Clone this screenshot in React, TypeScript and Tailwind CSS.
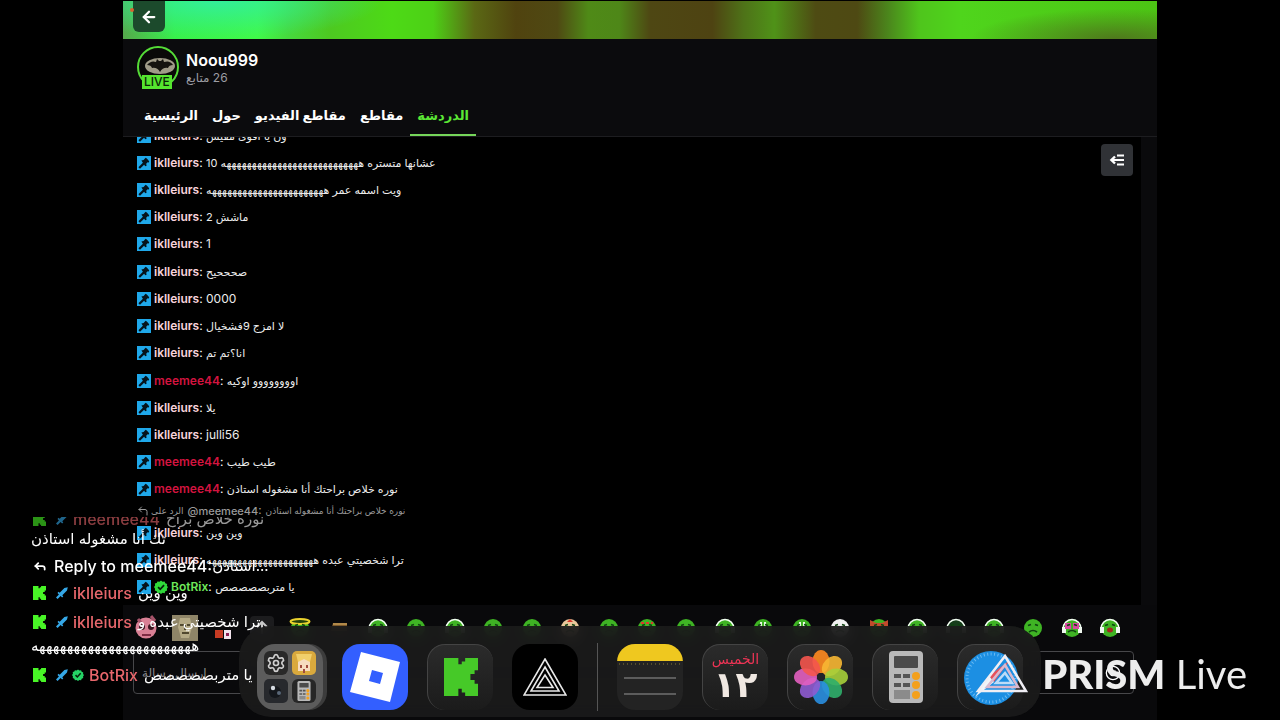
import React from 'react';
import { ArrowLeft, CornerUpLeft, Reply, Settings, Smile } from 'lucide-react';

type Message = { user: string; text: string; bot?: boolean; latin?: boolean };

const MESSAGES: Message[] = [
  { user: 'iklleiurs', text: 'ون يا اقوى مفيش' },
  { user: 'iklleiurs', text: 'عشانها متستره هههههههههههههههههههههههههههه 10' },
  { user: 'iklleiurs', text: 'ويت اسمه عمر هههههههههههههههههههههههه' },
  { user: 'iklleiurs', text: 'ماشش 2' },
  { user: 'iklleiurs', text: '1', latin: true },
  { user: 'iklleiurs', text: 'صحححيح' },
  { user: 'iklleiurs', text: '0000', latin: true },
  { user: 'iklleiurs', text: 'لا امزج 9فشخيال' },
  { user: 'iklleiurs', text: 'انا؟تم تم' },
  { user: 'meemee44', text: 'اوووووووو اوكيه' },
  { user: 'iklleiurs', text: 'يلا' },
  { user: 'iklleiurs', text: 'julli56', latin: true },
  { user: 'meemee44', text: 'طيب طيب' },
  { user: 'meemee44', text: 'نوره خلاص براحتك أنا مشغوله استاذن' },
];

const LATEST: Message[] = [
  { user: 'iklleiurs', text: 'وين وين' },
  { user: 'iklleiurs', text: 'ترا شخصيتي عبده هههههههههههههههههههههه' },
  { user: 'BotRix', text: 'يا متربصصصصص', bot: true },
];

const TABS = ['الرئيسية', 'حول', 'مقاطع الفيديو', 'مقاطع', 'الدردشة'];

const EMOTES = [
  'pink', 'statue', 'flag', 'more', 'halo', 'box', 'phones', 'plain', 'phones', 'plain', 'plain', 'santa', 'plain',
  'red', 'plain', 'phones', 'teeth', 'teeth', 'white', 'frog', 'phones', 'dark', 'phones', 'face', 'glasses', 'sing', 'white',
];

const PETALS = ['#ff8a1f', '#f7b733', '#a6cf3a', '#2fae6a', '#2a8fe0', '#8e5bd0', '#e35fc0', '#f4554e'];

const KickLogo: React.FC<{ className: string }> = ({ className }) => (
  <svg viewBox="0 0 9 9" preserveAspectRatio="none" className={className} fill="currentColor">
    <path d="M0 0h3.800v1.500h.9V.8h.9V0H9v2.900h-.9v.9H7v1.400h1.100v.9H9V9H5.600v-.8h-.9v-.9h-.9V9H0z" />
  </svg>
);

const ModBadge: React.FC = () => (
  <svg viewBox="0 0 14 14" className="size-[14px] shrink-0">
    <rect width="14" height="14" fill="#1fa8ea" />
    <path d="M2.2 12 7.6 6.600" stroke="#05131c" strokeWidth="2.200" />
    <path d="m4.400 4.600 2.200-.6 2-2.200 1.200.6 2.400 2.800-.4 1.400-1.200-.4-1.400 1.600.4 2-1.400.4z" fill="#05131c" />
  </svg>
);

const Sword: React.FC = () => (
  <svg viewBox="0 0 12 12" className="size-3 shrink-0">
    <path d="M11.8.2 11 3.600 6.300 8.300l1 1.200-1.200 1-1.500-1.400L1.600 12 0 10.400l2.900-2.900L1.500 6l1-1.200 1.200 1L8.400 1z" fill="#35a7e6" />
  </svg>
);

const Verified: React.FC<{ className: string }> = ({ className }) => (
  <svg viewBox="0 0 16 16" className={className}>
    <path d="m8 .5 1.8 1.4 2.3-.3.8 2.1 2.1.9-.3 2.2L16 8l-1.3 1.9.3 2.2-2.1.8-.8 2.1-2.3-.3L8 16l-1.8-1.3-2.3.3-.8-2.1-2.1-.8.3-2.2L0 8l1.3-1.8L1 4l2.1-.6.8-1.8 2.3.3z" fill="currentColor" />
    <path d="m4.7 8.2 2.4 2.4 4.4-4.8" fill="none" stroke="#06210a" strokeWidth="2" />
  </svg>
);

const Emote: React.FC<{ kind: string }> = ({ kind }) => {
  if (kind === 'pink') {
    return (
      <svg viewBox="0 0 24 26" className="h-[26px] w-6">
        <circle cx="12" cy="13" r="10.5" fill="#d98095" />
        <path d="M4 4 8 9M17 1l4 5" stroke="#a8546b" strokeWidth="3" />
        <circle cx="8" cy="12" r="3" fill="#3b1520" />
        <circle cx="17" cy="12" r="3" fill="#3b1520" />
        <circle cx="8" cy="11" r="1" fill="#fff" />
        <path d="M8 20h9" stroke="#7e2c43" strokeWidth="2" />
      </svg>
    );
  }
  if (kind === 'statue') {
    return (
      <svg viewBox="0 0 26 26" className="size-[26px]">
        <rect width="26" height="26" fill="#8f8568" />
        <path d="M8 3h10l2 9-3 11H9L6 12z" fill="#b5aa86" />
        <path d="M8 10h4M15 10h4M10 18h7M13 10v5" stroke="#51482f" strokeWidth="2" />
      </svg>
    );
  }
  if (kind === 'flag') {
    return (
      <svg viewBox="0 0 22 22" className="size-[22px]">
        <rect x="3" y="13" width="8" height="8" fill="#c63b23" />
        <rect x="12" y="13" width="7" height="9" fill="#f1e3ec" />
        <rect x="14" y="16" width="3" height="3" fill="#8c1e52" />
      </svg>
    );
  }
  if (kind === 'more') {
    return (
      <svg viewBox="0 0 24 24" className="size-6">
        <rect width="24" height="24" rx="4" fill="#1c1c1e" />
        <path d="M12 18V7M7 11l5-5 5 5" fill="none" stroke="#c9c9c9" strokeWidth="2" />
      </svg>
    );
  }
  if (kind === 'box') {
    return (
      <svg viewBox="0 0 22 22" className="size-[22px]">
        <path d="M5 6h14v8H3z" fill="#7d5a2c" />
        <path d="M5 6h14v2H5z" fill="#b28949" />
      </svg>
    );
  }
  const body = kind === 'white' ? '#f2f2f2' : kind === 'dark' ? '#163d1b' : kind === 'santa' ? '#e9c79a' : '#3fb424';
  const phones = ['phones', 'dark', 'glasses', 'sing'].includes(kind);
  return (
    <svg viewBox="0 0 22 22" className="size-[22px]">
      <ellipse cx="11" cy="11" rx="9" ry="9" fill={body} />
      {phones && <path d="M2 12a9 9.500 0 0 1 18 0" fill="none" stroke="#f4fff4" strokeWidth="1.6" />}
      {phones && <path d="M1 10h4v6H1zM17 10h4v6h-4z" fill="#eef7ee" />}
      {kind === 'halo' && <ellipse cx="11" cy="4.500" rx="9.5" ry="2.6" fill="#24420b" stroke="#ead22e" strokeWidth="2" />}
      {kind === 'santa' && <path d="M8 5 11 2l3 3z" fill="#d8392c" />}
      {kind === 'red' && <path d="M5 6h12" stroke="#df3a2c" strokeWidth="2" strokeDasharray="3 2" />}
      {kind === 'frog' && <path d="M2 3l6 3h6l6-3v7H2z" fill="#c34b2c" />}
      {kind === 'teeth' && <path d="M8 5h2v6H8zM12 5h2v6h-2z" fill="#eafbe4" />}
      {kind === 'glasses' && <path d="M4 6h6v6H4zM12 6h6v6h-6z" fill="#d84aa0" />}
      <path d="M6 8.500 9 7.500M13 7.500l3 1" stroke="#0f4310" strokeWidth="1.6" />
      {kind === 'sing' ? <ellipse cx="11" cy="13" rx="3" ry="2.5" fill="#a1281d" /> : <path d="M7 15q4-3 8 0" fill="none" stroke="#0f4310" strokeWidth="1.6" />}
    </svg>
  );
};

const ChatRow: React.FC<{ message: Message }> = ({ message }) => {
  const color = message.bot ? 'text-[#6ee85a]' : message.user === 'meemee44' ? 'text-[#d3143f]' : 'text-[#f8d3dc]';
  return (
    <li className="flex flex-1 items-center gap-[3px] whitespace-nowrap text-[12px]">
      <ModBadge />
      {message.bot && <Verified className="size-[14px] shrink-0 text-[#2fd93a]" />}
      <p>
        <span className={`font-semibold ${color}`}>{message.user}</span>:{' '}
        <bdi dir={message.latin ? 'ltr' : 'rtl'} className={message.latin ? 'text-[12px] text-[#ececec]' : 'text-[11px] text-[#ececec]'}>{message.text}</bdi>
      </p>
    </li>
  );
};

const OverlayRow: React.FC<{ user: string; text: string; bot?: boolean }> = ({ user, text, bot }) => (
  <div className="flex items-center">
    <KickLogo className="ml-0.5 h-[14px] w-[13px] shrink-0 text-[#48f526]" />
    <span className="ml-[10px] flex gap-1">
      <Sword />
      {bot && <Verified className="size-3 text-[#25d366]" />}
    </span>
    <span className="ml-[5px] mr-[6px] font-medium text-[#e8676c]">{user}</span>
    <bdi dir="rtl" className="text-[15px]">{text}</bdi>
  </div>
);

const tile = 'flex size-[66px] shrink-0 items-center justify-center overflow-hidden rounded-[18px]';
const darkTile = 'border-t border-l border-[#444] bg-gradient-to-b from-[#2b2b2b] to-[#1b1b1b]';

const Calculator: React.FC<{ className: string }> = ({ className }) => (
  <svg viewBox="0 0 34 52" className={className}>
    <rect width="34" height="52" rx="4" fill="#b9b9b9" />
    <rect x="5" y="5" width="24" height="12" rx="1" fill="#4b4b4b" />
    <path d="M5 25h16M5 34h16" stroke="#555" strokeWidth="4" strokeDasharray="7 2" />
    <rect x="5" y="39" width="16" height="9" fill="#8b8b8b" />
    <circle cx="27" cy="25" r="4" fill="#f3a01c" />
    <circle cx="27" cy="34" r="4" fill="#f3a01c" />
    <circle cx="27" cy="44" r="4" fill="#f3a01c" />
  </svg>
);

const Dock: React.FC = () => (
  <nav aria-label="Dock" className="flex h-[91px] items-center gap-[19px] rounded-[32px] bg-[#1b1b1b]/90 px-[18px] pt-[10px] backdrop-blur-sm">
    <button aria-label="Utilities" className={`${tile} bg-[#5c5c5c] shadow-[4px_0_0_#3c3c3c]`}>
      <span className="grid grid-cols-2 gap-1">
        <span className="flex size-6 items-center justify-center rounded-md bg-[#292929]"><Settings className="size-5 text-[#d0d0d0]" /></span>
        <svg viewBox="0 0 24 24" className="size-6">
          <rect width="24" height="24" rx="5" fill="#d9a93d" />
          <path d="M6 8h12v12H6z" fill="#f6dcc0" />
          <path d="M4 3h16l-2 8-6-3-6 3z" fill="#f1cf6b" />
          <path d="M9 14v3M15 14v3M12 18v4" stroke="#a04b3e" strokeWidth="2" />
        </svg>
        <svg viewBox="0 0 24 24" className="size-6">
          <rect width="24" height="24" rx="5" fill="#27292d" />
          <circle cx="11" cy="13" r="6" fill="#14171c" />
          <circle cx="9" cy="9" r="2.2" fill="#d5dbe2" />
          <circle cx="15" cy="14" r="2" fill="#596778" />
        </svg>
        <span className="flex size-6 items-center justify-center rounded-md bg-[#272727]"><Calculator className="h-5 w-[14px]" /></span>
      </span>
    </button>
    <button aria-label="Roblox" className={`${tile} bg-[#335fff]`}>
      <svg viewBox="0 0 66 66" className="size-full">
        <path fillRule="evenodd" d="M19 8 58 18 48 58 8 48zM30 26l-3 11 11 3 3-11z" fill="#fff" />
      </svg>
    </button>
    <button aria-label="Kick" className={`${tile} ${darkTile}`}><KickLogo className="h-[38px] w-[34px] text-[#46c928]" /></button>
    <button aria-label="PRISM Live Studio" className={`${tile} bg-black`}>
      <svg viewBox="0 0 44 38" className="h-[38px] w-11" fill="none" stroke="#e8e8e8" strokeWidth="1.6">
        <path d="M22 1 43 37H1zM22 9 36 33H8zM22 17l8 12.500H14z" />
      </svg>
    </button>
    <span className="h-[68px] w-px shrink-0 bg-[#555]" />
    <button aria-label="Notes" className={`${tile} bg-[#232323]`}>
      <svg viewBox="0 0 66 66" className="size-full">
        <rect width="66" height="17" fill="#efc81f" />
        <path d="M2 20h62" stroke="#8a7a34" strokeWidth="1" strokeDasharray="1 3" />
        <path d="M7 34h52M7 50h52" stroke="#707070" strokeWidth="1.5" />
      </svg>
    </button>
    <button aria-label="Calendar" className={`${tile} ${darkTile} flex-col font-['DejaVu_Sans',sans-serif]`}>
      <span className="text-[14px] leading-4 text-[#ee3455]">الخميس</span>
      <span className="text-[36px] font-bold leading-9 text-[#f0e8e2]">١٢</span>
    </button>
    <button aria-label="Photos" className={`${tile} ${darkTile}`}>
      <svg viewBox="0 0 60 60" className="size-[60px]">
        {PETALS.map((fill, i) => (
          <ellipse key={fill} cx="30" cy="14.500" rx="8.500" ry="11.500" fill={fill} opacity="0.9" transform={`rotate(${i * 45} 30 30)`} />
        ))}
        <circle cx="30" cy="30" r="4" fill="#20242a" />
      </svg>
    </button>
    <button aria-label="Calculator" className={`${tile} ${darkTile}`}><Calculator className="h-[52px] w-[34px]" /></button>
    <button aria-label="Safari" className={`${tile} ${darkTile}`}>
      <svg viewBox="0 0 60 60" className="size-[60px]">
        <circle cx="30" cy="31" r="27" fill="#1c8fe3" />
        <circle cx="30" cy="31" r="24" fill="none" stroke="#6cbaf0" strokeWidth="3" strokeDasharray="1 2.500" />
        <path d="M49 13 33 35l-5-6z" fill="#e7505c" />
        <path d="m14 50 14-21 5 6z" fill="#f1f5f9" />
      </svg>
    </button>
  </nav>
);

const App: React.FC = () => {
  return (
    <div className="relative min-h-screen overflow-hidden bg-black font-['Inter','DejaVu_Sans',sans-serif] text-white">
      <main className="flex min-h-screen flex-col px-[123px] pt-px">
        {/* Channel banner */}
        <div className="relative h-[38px] bg-[radial-gradient(ellipse_16%_100%_at_9%_0%,#33ee99_0%,transparent_100%),radial-gradient(ellipse_14%_80%_at_96%_100%,#4f781c_0%,transparent_100%),linear-gradient(90deg,#55a84c_0%,#38f04a_5%,#40fa48_13%,#46d93d_16%,#4dc921_20%,#4dda16_26%,#4dd016_30%,#5a6814_34%,#50430f_38%,#4f4913_42%,#4f8a17_45%,#4e8718_48%,#4e4713_51%,#4e4312_57%,#4e7218_60%,#4f9218_63%,#4e4b13_67%,#4e4913_71%,#4b861c_74%,#4fc51c_77%,#4fd51c_81%,#4cc414_100%)] px-[10px]">
          <span className="absolute left-[7px] top-[7px] size-1 rounded-full bg-[#d9622f]" />
          <button aria-label="Back" className="flex h-[31px] w-8 items-center justify-center rounded-b-md bg-[#1c4a2c]">
            <ArrowLeft className="size-[18px]" strokeWidth={3} />
          </button>
        </div>

        {/* Channel header */}
        <header className="border-b border-[#1d1d20] bg-[#0b0b0d] px-[14px] pt-[7px]">
          <div className="flex gap-[7px]">
            <div className="relative size-[42px]">
              <svg viewBox="0 0 42 42" className="size-full">
                <circle cx="21" cy="21" r="20" fill="#0a0908" stroke="#55dc37" strokeWidth="2" />
                <ellipse cx="23" cy="20" rx="15" ry="8" fill="#a09b88" />
                <path d="M10 19q4-5 9-3l1-3 2 2h2l2-2 1 3q6-2 9 3-4 0-5 3-5-1-8 4-3-5-8-4-1-3-5-3z" fill="#15130f" />
              </svg>
              <span className="absolute left-[5px] top-[29px] bg-[#55e52f] px-[2px] text-[12px] font-medium leading-[14px] text-[#0b2407]">LIVE</span>
            </div>
            <div className="pt-1">
              <h1 className="text-[16px] font-semibold leading-5">Noou999</h1>
              <p dir="rtl" className="w-fit text-[12px] leading-4 text-[#9d9da3]">26 متابع</p>
            </div>
          </div>
          <nav className="mt-3 flex text-[13px] font-bold leading-5">
            {TABS.map((tab, i) => (
              <a key={tab} href="#chat" className={i === 4 ? 'border-b-2 border-[#76d65a] px-[7px] pb-[9px] pt-[5px] text-[#5be835]' : 'px-[7px] pb-[9px] pt-[5px]'}>
                {tab}
              </a>
            ))}
          </nav>
        </header>

        {/* Chat */}
        <section id="chat" className="flex h-[468px] items-start justify-between overflow-hidden border-r-[16px] border-[#0a0a0c] pl-[14px] pr-2">
          <div className="-mt-[15px]">
            <ul className="flex h-[381px] flex-col">
              {MESSAGES.map((message, i) => <ChatRow key={i} message={message} />)}
            </ul>
            <p className="flex h-4 items-center gap-[2px] whitespace-nowrap text-[9px] text-[#9a9a9a]">
              <CornerUpLeft className="size-3" />
              <bdi dir="rtl">الرد على</bdi>
              <span className="mx-[2px] text-[11px] font-medium">@meemee44:</span>
              <bdi dir="rtl">نوره خلاص براحتك أنا مشغوله استاذن</bdi>
            </p>
            <ul className="flex h-[81px] flex-col">
              {LATEST.map((message, i) => <ChatRow key={i} message={message} />)}
            </ul>
          </div>
          <button aria-label="Expand chat" className="mt-[7px] flex size-8 items-center justify-center rounded bg-[#303236]">
            <svg viewBox="0 0 16 16" className="size-4" fill="none" stroke="#fff" strokeWidth="2">
              <path d="M8 3.500h7M4 8h11M8 12.500h7" />
              <path d="M6 4.500 2.400 8 6 11.500" strokeWidth="2.400" />
            </svg>
          </button>
        </section>

        {/* Emotes and composer */}
        <footer className="flex-1 bg-[#09090b] px-[10px] pt-[10px]">
          <div className="-ml-[6px] mr-[7px] overflow-hidden">
            <div className="-mr-[28px] grid h-[26px] grid-cols-[repeat(27,minmax(0,1fr))] items-center justify-items-center">
              {EMOTES.map((kind, i) => <Emote key={i} kind={kind} />)}
            </div>
          </div>
          <form className="mr-[13px] mt-[10px] flex h-[43px] items-center rounded border border-[#47474a] px-2">
            <input aria-label="إرسال رسالة" placeholder="إرسال رسالة" className="min-w-0 flex-1 bg-transparent text-[12px] text-white outline-none placeholder:text-[#8b8b8f]" />
            <Smile className="mr-1 size-4" />
          </form>
        </footer>
      </main>

      <div className="absolute inset-x-0 bottom-[3px] flex justify-center">
        <Dock />
      </div>

      {/* Stream chat overlay */}
      <div className="absolute left-[31px] top-[517px] overflow-hidden whitespace-nowrap text-[16px] leading-5">
        <div className="-mt-2 flex flex-col gap-[7px]">
          <div>
            <div className="opacity-60"><OverlayRow user="meemee44" text="نوره خلاص براح" /></div>
            <bdi dir="rtl" className="block w-fit text-[15px]">تك أنا مشغوله استاذن</bdi>
          </div>
          <div className="flex items-center font-medium">
            <Reply className="ml-0.5 mr-[7px] size-[14px]" strokeWidth={3} />
            Reply to meemee44:
            <bdi dir="ltr" className="text-[15px] font-normal">استاذن...</bdi>
          </div>
          <OverlayRow user="iklleiurs" text="وين وين" />
          <div className="leading-6">
            <OverlayRow user="iklleiurs" text="ترا شخصيتي عبده و" />
            <bdi dir="rtl" className="block w-fit text-[15px]">هههههههههههههههههههههههه</bdi>
          </div>
          <OverlayRow user="BotRix" text="يا متربصصصصص" bot />
        </div>
      </div>

      {/* Watermark */}
      <div className="absolute bottom-[22px] right-[33px] flex items-center gap-[14px]">
        <svg viewBox="0 0 54 40" className="h-10 w-[54px]" fill="none" strokeWidth="2.500">
          <path d="M31 2 52 37H4z" stroke="#f0eef4" />
          <path d="M31 11 44 33H13z" stroke="#d9b9cf" />
          <path d="M31 19l7 10H22z" stroke="#bcdcf8" />
        </svg>
        <p className="font-['Lato',sans-serif] text-[40px] leading-[48px] text-[#ededed]">
          <span className="font-black">PRISM</span> <span>Live</span>
        </p>
      </div>
    </div>
  );
};

export default App;
